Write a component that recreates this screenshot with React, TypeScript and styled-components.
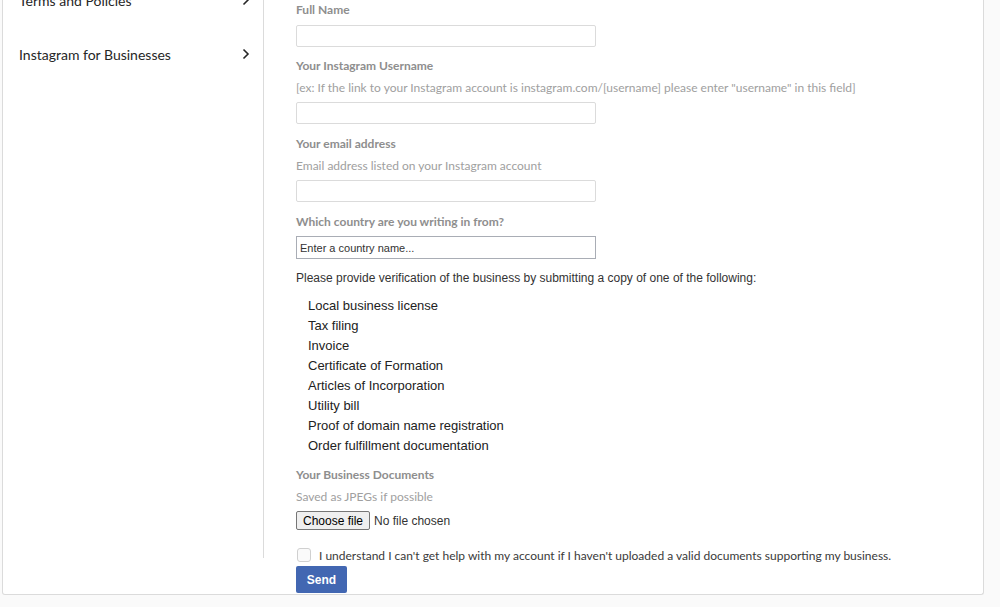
import styled, { createGlobalStyle } from 'styled-components';

const GlobalStyle = createGlobalStyle`
  body {
    margin: 0;
    background: #fafafa;
    font-family: 'Liberation Sans', Arial, sans-serif;
    overflow: hidden;
  }
`;

const sidebarItems = ['Terms and Policies', 'Instagram for Businesses'];

const documents = [
  'Local business license',
  'Tax filing',
  'Invoice',
  'Certificate of Formation',
  'Articles of Incorporation',
  'Utility bill',
  'Proof of domain name registration',
  'Order fulfillment documentation',
];

function Chevron() {
  return (
    <svg width="8" height="12" viewBox="0 0 8 12">
      <polyline points="1.5,1.5 6,6 1.5,10.5" fill="none" stroke="#262626" strokeWidth="1.6" />
    </svg>
  );
}

function App() {
  return (
    <Page>
      <GlobalStyle />
      <Card>
        <Row>
          <Sidebar>
            {sidebarItems.map((item) => (
              <SidebarItem key={item}>
                {item}
                <Chevron />
              </SidebarItem>
            ))}
          </Sidebar>
          <Main>
            <Field>
              <Label>Full Name</Label>
              <TextInput />
            </Field>
            <Field>
              <Label>Your Instagram Username</Label>
              <Hint>[ex: If the link to your Instagram account is instagram.com/[username] please enter "username" in this field]</Hint>
              <TextInput />
            </Field>
            <Field>
              <Label>Your email address</Label>
              <Hint>Email address listed on your Instagram account</Hint>
              <TextInput />
            </Field>
            <Field>
              <Label>Which country are you writing in from?</Label>
              <CountryInput placeholder="Enter a country name..." />
            </Field>
            <Intro>Please provide verification of the business by submitting a copy of one of the following:</Intro>
            <DocList>
              {documents.map((doc) => (
                <DocItem key={doc}>{doc}</DocItem>
              ))}
            </DocList>
            <Field>
              <Label>Your Business Documents</Label>
              <Hint>Saved as JPEGs if possible</Hint>
              <FileRow>
                <FileButton type="button">Choose file</FileButton>
                <FileStatus>No file chosen</FileStatus>
              </FileRow>
            </Field>
            <CheckRow>
              <Checkbox type="checkbox" />
              <CheckText>I understand I can't get help with my account if I haven't uploaded a valid documents supporting my business.</CheckText>
            </CheckRow>
          </Main>
        </Row>
        <Footer>
          <SendButton>Send</SendButton>
        </Footer>
      </Card>
    </Page>
  );
}

export default App;

const Page = styled.div`
  padding: 0 16px 0 2px;
`;

const Card = styled.div`
  margin-top: -27px;
  padding-bottom: 1px;
  background: #fff;
  border: 1px solid #dbdbdb;
  border-top: none;
  border-radius: 0 0 3px 3px;
`;

const Row = styled.div`
  display: flex;
`;

const Sidebar = styled.div`
  width: 260px;
  flex-shrink: 0;
  border-right: 1px solid #dbdbdb;
`;

const SidebarItem = styled.div`
  height: 54px;
  display: flex;
  align-items: center;
  justify-content: space-between;
  padding: 0 13px 0 16px;
  font-family: 'Lato', 'Liberation Sans', sans-serif;
  font-size: 14px;
  color: #262626;
`;

const Main = styled.div`
  flex: 1;
  padding: 30px 0 0 32px;
`;

const Field = styled.div`
  margin-bottom: 13px;
  &:first-child {
    margin-bottom: 12px;
  }
`;

const Label = styled.div`
  font-family: 'Lato', 'Liberation Sans', sans-serif;
  font-size: 12px;
  line-height: 14px;
  font-weight: 700;
  color: #8e8e8e;
  margin-bottom: 8px;
`;

const Hint = styled.div`
  font-family: 'Lato', 'Liberation Sans', sans-serif;
  font-size: 12px;
  line-height: 14px;
  color: #a0a0a0;
  margin: 1px 0 7px;
`;

const TextInput = styled.input`
  display: block;
  box-sizing: border-box;
  width: 300px;
  height: 22px;
  border: 1px solid #dbdbdb;
  border-radius: 2px;
  background: #fff;
  outline: none;
`;

const CountryInput = styled(TextInput)`
  height: 23px;
  margin-top: -1px;
  border-color: #a9adb5;
  border-radius: 0;
  padding: 0 3px;
  font-family: 'Liberation Sans', Arial, sans-serif;
  font-size: 11px;
  &::placeholder {
    color: #333;
  }
`;

const Intro = styled.div`
  font-size: 12px;
  line-height: 14px;
  color: #333;
  margin-top: -1px;
`;

const DocList = styled.ul`
  list-style: none;
  margin: 11px 0 12px;
  padding-left: 12px;
`;

const DocItem = styled.li`
  font-size: 13px;
  line-height: 20px;
  color: #222;
`;

const FileRow = styled.div`
  display: flex;
  align-items: center;
  gap: 4px;
`;

const FileButton = styled.button`
  height: 19px;
  padding: 0 6px;
  border: 1px solid #767676;
  border-radius: 2px;
  background: #efefef;
  font-family: 'Liberation Sans', Arial, sans-serif;
  font-size: 12px;
  color: #000;
`;

const FileStatus = styled.span`
  font-size: 12px;
  color: #333;
`;

const CheckRow = styled.div`
  display: flex;
  align-items: center;
  gap: 8px;
  margin-top: 18px;
  margin-bottom: -4px;
  height: 14px;
`;

const Checkbox = styled.input`
  appearance: none;
  margin: 0 0 0 1px;
  width: 14px;
  height: 14px;
  border: 1px solid #d0d0d0;
  border-radius: 3px;
  background: #fafafa;
`;

const CheckText = styled.span`
  font-family: 'Lato', 'Liberation Sans', sans-serif;
  font-size: 12px;
  color: #3a3a3a;
`;

const Footer = styled.div`
  padding: 8px 0 0 293px;
`;

const SendButton = styled.button`
  display: block;
  height: 27px;
  width: 51px;
  border: none;
  border-radius: 2px;
  background: #4267b2;
  color: #fff;
  font-family: 'Liberation Sans', Arial, sans-serif;
  font-size: 12px;
  font-weight: 700;
  cursor: pointer;
`;
